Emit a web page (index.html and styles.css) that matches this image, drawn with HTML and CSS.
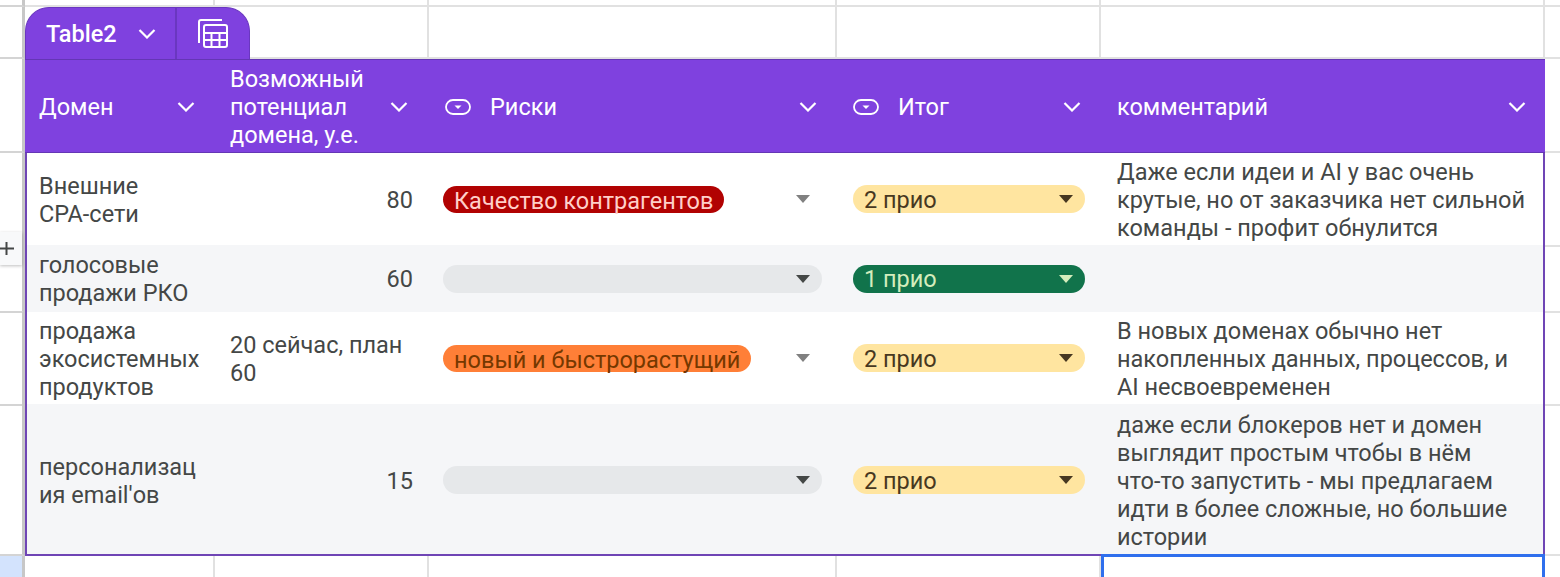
FILE: index.html
```html
<!DOCTYPE html>
<html lang="ru">

<head>
    <meta charset="UTF-8">
    <meta name="viewport" content="width=device-width, initial-scale=1.0">
    <title>Table2</title>
    <link rel="stylesheet" href="styles.css">
</head>

<body>
    <svg class="defs" width="0" height="0">
        <symbol id="chevron" viewBox="0 0 18 10">
            <polyline points="1.5,1 9,8.5 16.5,1" fill="none" stroke="#fff" stroke-width="2.2"></polyline>
        </symbol>
        <symbol id="dropdown" viewBox="0 0 26 16">
            <rect x="1" y="1" width="24" height="14" rx="7" fill="none" stroke="#fff" stroke-width="1.8"></rect>
            <path d="M9.5 6.5h7L13 10z" fill="#fff"></path>
        </symbol>
    </svg>

    <div class="sheet">
        <div class="row row-top">
            <div class="gutter"></div>
            <div class="cell"></div>
            <div class="cell"></div>
            <div class="cell"></div>
            <div class="cell"></div>
            <div class="cell"></div>
            <div class="tail"></div>
        </div>
        <div class="row row-tab">
            <div class="gutter"></div>
            <div class="cell"></div>
            <div class="cell"></div>
            <div class="cell"></div>
            <div class="cell"></div>
            <div class="cell"></div>
            <div class="tail"></div>
        </div>

        <!-- вкладка таблицы -->
        <div class="tab">
            <div class="tab-name">
                <span>Table2</span>
                <svg class="chevron"><use href="#chevron"></use></svg>
            </div>
            <div class="tab-calc">
                <svg width="32" height="32" viewBox="197 18 32 32" fill="none" stroke="#fff" stroke-width="2">
                    <path d="M222 20H201a2 2 0 0 0-2 2v21"></path>
                    <rect x="204" y="25" width="23" height="22" rx="2"></rect>
                    <path d="M204 33h23M204 40h23M211.500 33v14M219.500 33v14"></path>
                </svg>
            </div>
        </div>

        <!-- шапка -->
        <div class="row row-head">
            <div class="gutter"></div>
            <div class="head first">
                <span>Домен</span>
                <svg class="chevron"><use href="#chevron"></use></svg>
            </div>
            <div class="head potential">
                <span>Возможный потенциал домена, у.е.</span>
                <svg class="chevron"><use href="#chevron"></use></svg>
            </div>
            <div class="head">
                <svg class="type-icon"><use href="#dropdown"></use></svg>
                <span>Риски</span>
                <svg class="chevron"><use href="#chevron"></use></svg>
            </div>
            <div class="head">
                <svg class="type-icon"><use href="#dropdown"></use></svg>
                <span>Итог</span>
                <svg class="chevron"><use href="#chevron"></use></svg>
            </div>
            <div class="head last">
                <span>комментарий</span>
                <svg class="chevron"><use href="#chevron"></use></svg>
            </div>
            <div class="tail"></div>
        </div>

        <!-- строки -->
        <div class="row row-1">
            <div class="gutter"></div>
            <div class="data first">Внешние<br>CPA-сети</div>
            <div class="data num">80</div>
            <div class="data risk">
                <div class="select">
                    <span class="chip red">Качество контрагентов</span>
                    <i class="arrow muted"></i>
                </div>
            </div>
            <div class="data total">
                <div class="select fill yellow"><span>2 прио</span><i class="arrow"></i></div>
            </div>
            <div class="data last">Даже если идеи и AI у вас очень крутые, но от заказчика нет сильной команды - профит обнулится</div>
            <div class="tail"></div>
        </div>
        <div class="row row-2 stripe">
            <div class="gutter"></div>
            <div class="data first">голосовые<br>продажи РКО</div>
            <div class="data num">60</div>
            <div class="data risk">
                <div class="select fill empty"><span></span><i class="arrow"></i></div>
            </div>
            <div class="data total">
                <div class="select fill green"><span>1 прио</span><i class="arrow"></i></div>
            </div>
            <div class="data last"></div>
            <div class="tail"></div>
        </div>
        <div class="row row-3">
            <div class="gutter"></div>
            <div class="data first">продажа<br>экосистемных<br>продуктов</div>
            <div class="data">20 сейчас, план 60</div>
            <div class="data risk">
                <div class="select">
                    <span class="chip orange">новый и быстрорастущий</span>
                    <i class="arrow muted"></i>
                </div>
            </div>
            <div class="data total">
                <div class="select fill yellow"><span>2 прио</span><i class="arrow"></i></div>
            </div>
            <div class="data last">В новых доменах обычно нет<br>накопленных данных, процессов, и<br>AI несвоевременен</div>
            <div class="tail"></div>
        </div>
        <div class="row row-4 stripe">
            <div class="gutter"></div>
            <div class="data first">персонализац<br>ия email'ов</div>
            <div class="data num">15</div>
            <div class="data risk">
                <div class="select fill empty"><span></span><i class="arrow"></i></div>
            </div>
            <div class="data total">
                <div class="select fill yellow"><span>2 прио</span><i class="arrow"></i></div>
            </div>
            <div class="data last">даже если блокеров нет и домен<br>выглядит простым чтобы в нём<br>что-то запустить - мы предлагаем<br>идти в более сложные, но большие<br>истории</div>
            <div class="tail"></div>
        </div>

        <div class="row row-bottom">
            <div class="gutter selected"></div>
            <div class="cell"></div>
            <div class="cell"></div>
            <div class="cell"></div>
            <div class="cell"></div>
            <div class="cell active"></div>
            <div class="tail"></div>
        </div>

        <!-- кнопка добавления строки -->
        <div class="add-row">
            <svg width="15" height="15" viewBox="0 0 15 15" stroke="#444746" stroke-width="2">
                <path d="M0 7.500h14M6.500 1v13"></path>
            </svg>
        </div>
    </div>
</body>

</html>
```

FILE: styles.css
```css
body {
    margin: 0;
    background-color: #fff;
    font-family: Roboto, "Noto Sans", sans-serif;
    font-size: 23.5px;
    line-height: 28px;
    color: #444746;
}

.defs {
    position: absolute;
}

.sheet {
    position: relative;
    width: 1560px;
    height: 577px;
    overflow: hidden;
}

.row {
    display: grid;
    grid-template-columns: 25px 190px 214px 408px 264px 444px 15px;
}

.row-top {
    height: 7px;
}

.row-tab {
    height: 52px;
}

.row-head {
    height: 94px;
}

.row-1 {
    height: 92px;
}

.row-2 {
    height: 67px;
}

.row-3 {
    height: 92px;
}

.row-4 {
    height: 152px;
}

.row-bottom {
    height: 21px;
}

/* сетка листа */
.gutter {
    box-sizing: border-box;
    border-right: 3px solid #c7c7c7;
    border-bottom: 2px solid #d4d4d4;
}

.gutter.selected {
    background-color: #d3e3fd;
}

.cell,
.tail {
    box-sizing: border-box;
    border-right: 2px solid #e1e1e1;
    border-bottom: 2px solid #e1e1e1;
}

.tail {
    border-right: none;
}

/* линии листа чуть ниже границ строк таблицы */
.row-1 .gutter,
.row-1 .tail,
.row-3 .gutter,
.row-3 .tail {
    margin-bottom: -2px;
}

.row-2 .gutter,
.row-2 .tail {
    margin-bottom: -1px;
}

.cell.active {
    position: relative;
    margin-top: -2px;
    height: 40px;
    border: 3px solid #2f6fed;
}

/* вкладка */
.tab {
    position: absolute;
    left: 25px;
    top: 7px;
    width: 225px;
    height: 52px;
    display: flex;
    box-sizing: border-box;
    background-color: #7f41df;
    border: 1px solid #6a37c0;
    border-bottom: none;
    border-radius: 24px 24px 0 0;
    color: #fff;
    font-weight: 500;
}

.tab-name {
    width: 151px;
    display: flex;
    align-items: center;
    padding-left: 20px;
    box-sizing: border-box;
    border-right: 2px solid #6a37c0;
}

.tab-name .chevron {
    margin-left: 21px;
}

.tab-calc {
    flex: 1;
    display: flex;
    align-items: center;
    justify-content: center;
}

.chevron {
    flex: none;
    width: 18px;
    height: 10px;
}

.type-icon {
    flex: none;
    width: 26px;
    height: 16px;
    margin: 0 19px 0 1px;
}

/* шапка */
.head {
    display: flex;
    align-items: center;
    box-sizing: border-box;
    padding: 1px 20px 0 15px;
    background-color: #7f41df;
    border-top: 1px solid #6436b5;
    border-bottom: 1px solid #6436b5;
    color: #fff;
}

.head .chevron {
    margin-left: auto;
}

.head.first {
    padding-left: 14px;
}

.head.potential {
    padding-right: 21px;
}

.head.last {
    padding-left: 16px;
    padding-right: 19px;
}

/* данные */
.data {
    display: flex;
    align-items: center;
    box-sizing: border-box;
    padding: 0 14px 0 15px;
}

.stripe .data {
    background-color: #f5f6f8;
}

.data.num {
    justify-content: flex-end;
    padding-right: 16px;
}

.data.risk {
    padding: 0 15px 0 14px;
}

.data.total {
    padding: 0 16px 0 16px;
}

.data.first {
    padding-left: 12px;
    border-left: 2px solid #6f45b5;
}

.data.last {
    padding-left: 16px;
    padding-right: 12px;
    border-right: 2px solid #6f45b5;
}

.row-1 .data,
.row-3 .data {
    padding-top: 2px;
}

.row-4 .data {
    padding-top: 4px;
    border-bottom: 2px solid #6f45b5;
}

.select {
    flex: 1;
    display: flex;
    align-items: center;
    justify-content: space-between;
    height: 28px;
    padding-right: 12px;
    border-radius: 14px;
}

.row-1 .select,
.row-3 .select,
.row-4 .select {
    margin-top: -2px;
}

.select.fill {
    padding-left: 11px;
}

.chip {
    padding: 0 11px;
    border-radius: 14px;
    height: 27px;
    line-height: 30px;
}

.chip.red {
    background-color: #b10202;
    color: #ffcfc9;
}

.chip.orange {
    background-color: #ff7f37;
    color: #753800;
}

.yellow {
    background-color: #ffe5a0;
    color: #473821;
}

.yellow span {
    padding-top: 2px;
}

.green {
    background-color: #11734b;
    color: #d4edbc;
}

.empty {
    background-color: #e6e8ea;
    color: #444746;
}

.arrow {
    width: 0;
    height: 0;
    border-left: 7px solid transparent;
    border-right: 7px solid transparent;
    border-top: 8px solid currentColor;
}

.arrow.muted {
    color: #808080;
}

/* плюс слева */
.add-row {
    position: absolute;
    left: 0;
    top: 232px;
    width: 22px;
    height: 33px;
    display: flex;
    align-items: center;
    background-color: #f8f9fa;
    box-shadow: 0 1px 3px rgba(0, 0, 0, 0.25);
}
```
